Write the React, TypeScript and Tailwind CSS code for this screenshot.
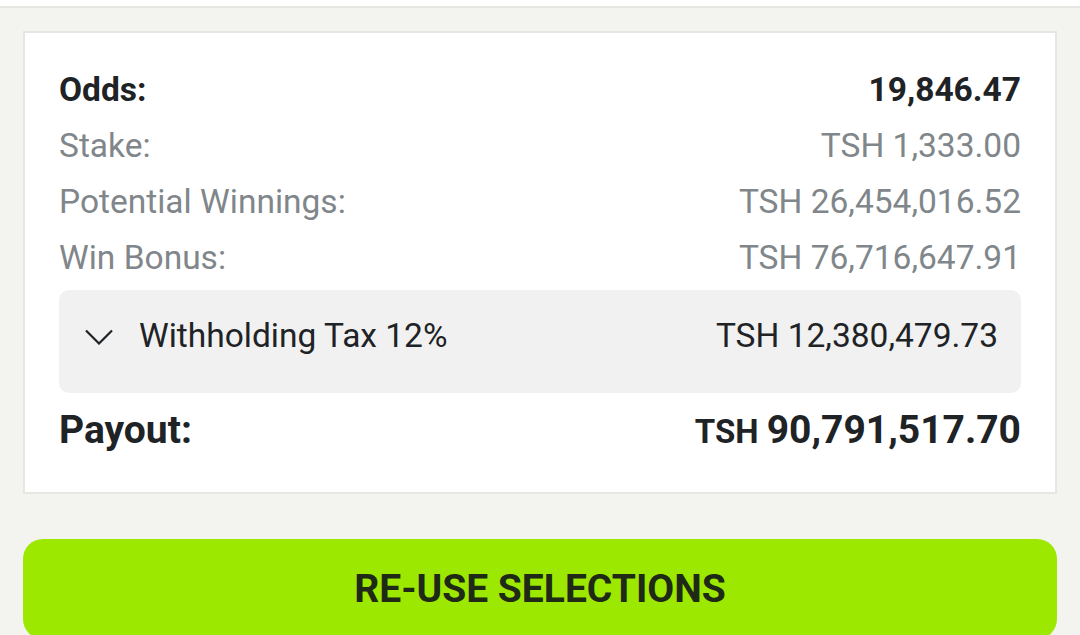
import React from 'react';

const rows = [
  { label: 'Stake:', value: 'TSH 1,333.00' },
  { label: 'Potential Winnings:', value: 'TSH 26,454,016.52' },
  { label: 'Win Bonus:', value: 'TSH 76,716,647.91' },
];

const App: React.FC = () => {
  return (
    <div className="min-h-[635px] w-[1080px] overflow-hidden bg-[#f3f3f0] font-['Roboto',sans-serif]">
      <div className="h-[6px] bg-white" />
      <div className="h-[2px] bg-[#e6e6e3]" />
      <div className="px-[23px] pt-[23px]">
        <div className="border-2 border-[#e6e6e3] bg-white px-[34px] pb-[25px] pt-[29px]">
          <div className="flex h-[56px] items-center justify-between text-[33.5px] font-bold text-[#202326]">
            <span>Odds:</span>
            <span>19,846.47</span>
          </div>
          {rows.map((row) => (
            <div key={row.label} className="flex h-[56px] items-center justify-between text-[33.5px] text-[#80868a]">
              <span>{row.label}</span>
              <span>{row.value}</span>
            </div>
          ))}
          <div className="mt-[4px] flex h-[103px] items-center justify-between rounded-[10px] bg-[#f1f1f1] pb-[10px] pl-[26px] pr-[23px] text-[33.5px] text-[#202326]">
            <div className="flex items-center gap-[26px]">
              <svg width="28" height="16" viewBox="0 0 28 16" fill="none">
                <path d="M1 1.5L14 14.5L27 1.5" stroke="#202326" strokeWidth="2.2" />
              </svg>
              <span>Withholding Tax 12%</span>
            </div>
            <span>TSH 12,380,479.73</span>
          </div>
          <div className="flex h-[74px] items-center justify-between font-bold text-[#202326]">
            <span className="text-[39px]">Payout:</span>
            <span>
              <span className="text-[33px]">TSH </span>
              <span className="text-[39px]">90,791,517.70</span>
            </span>
          </div>
        </div>
        <button className="mt-[45px] flex h-[100px] w-full items-center justify-center rounded-[20px] bg-[#9de800] text-[39px] font-bold text-[#1e2a16]">
          RE-USE SELECTIONS
        </button>
      </div>
    </div>
  );
};

export default App;
